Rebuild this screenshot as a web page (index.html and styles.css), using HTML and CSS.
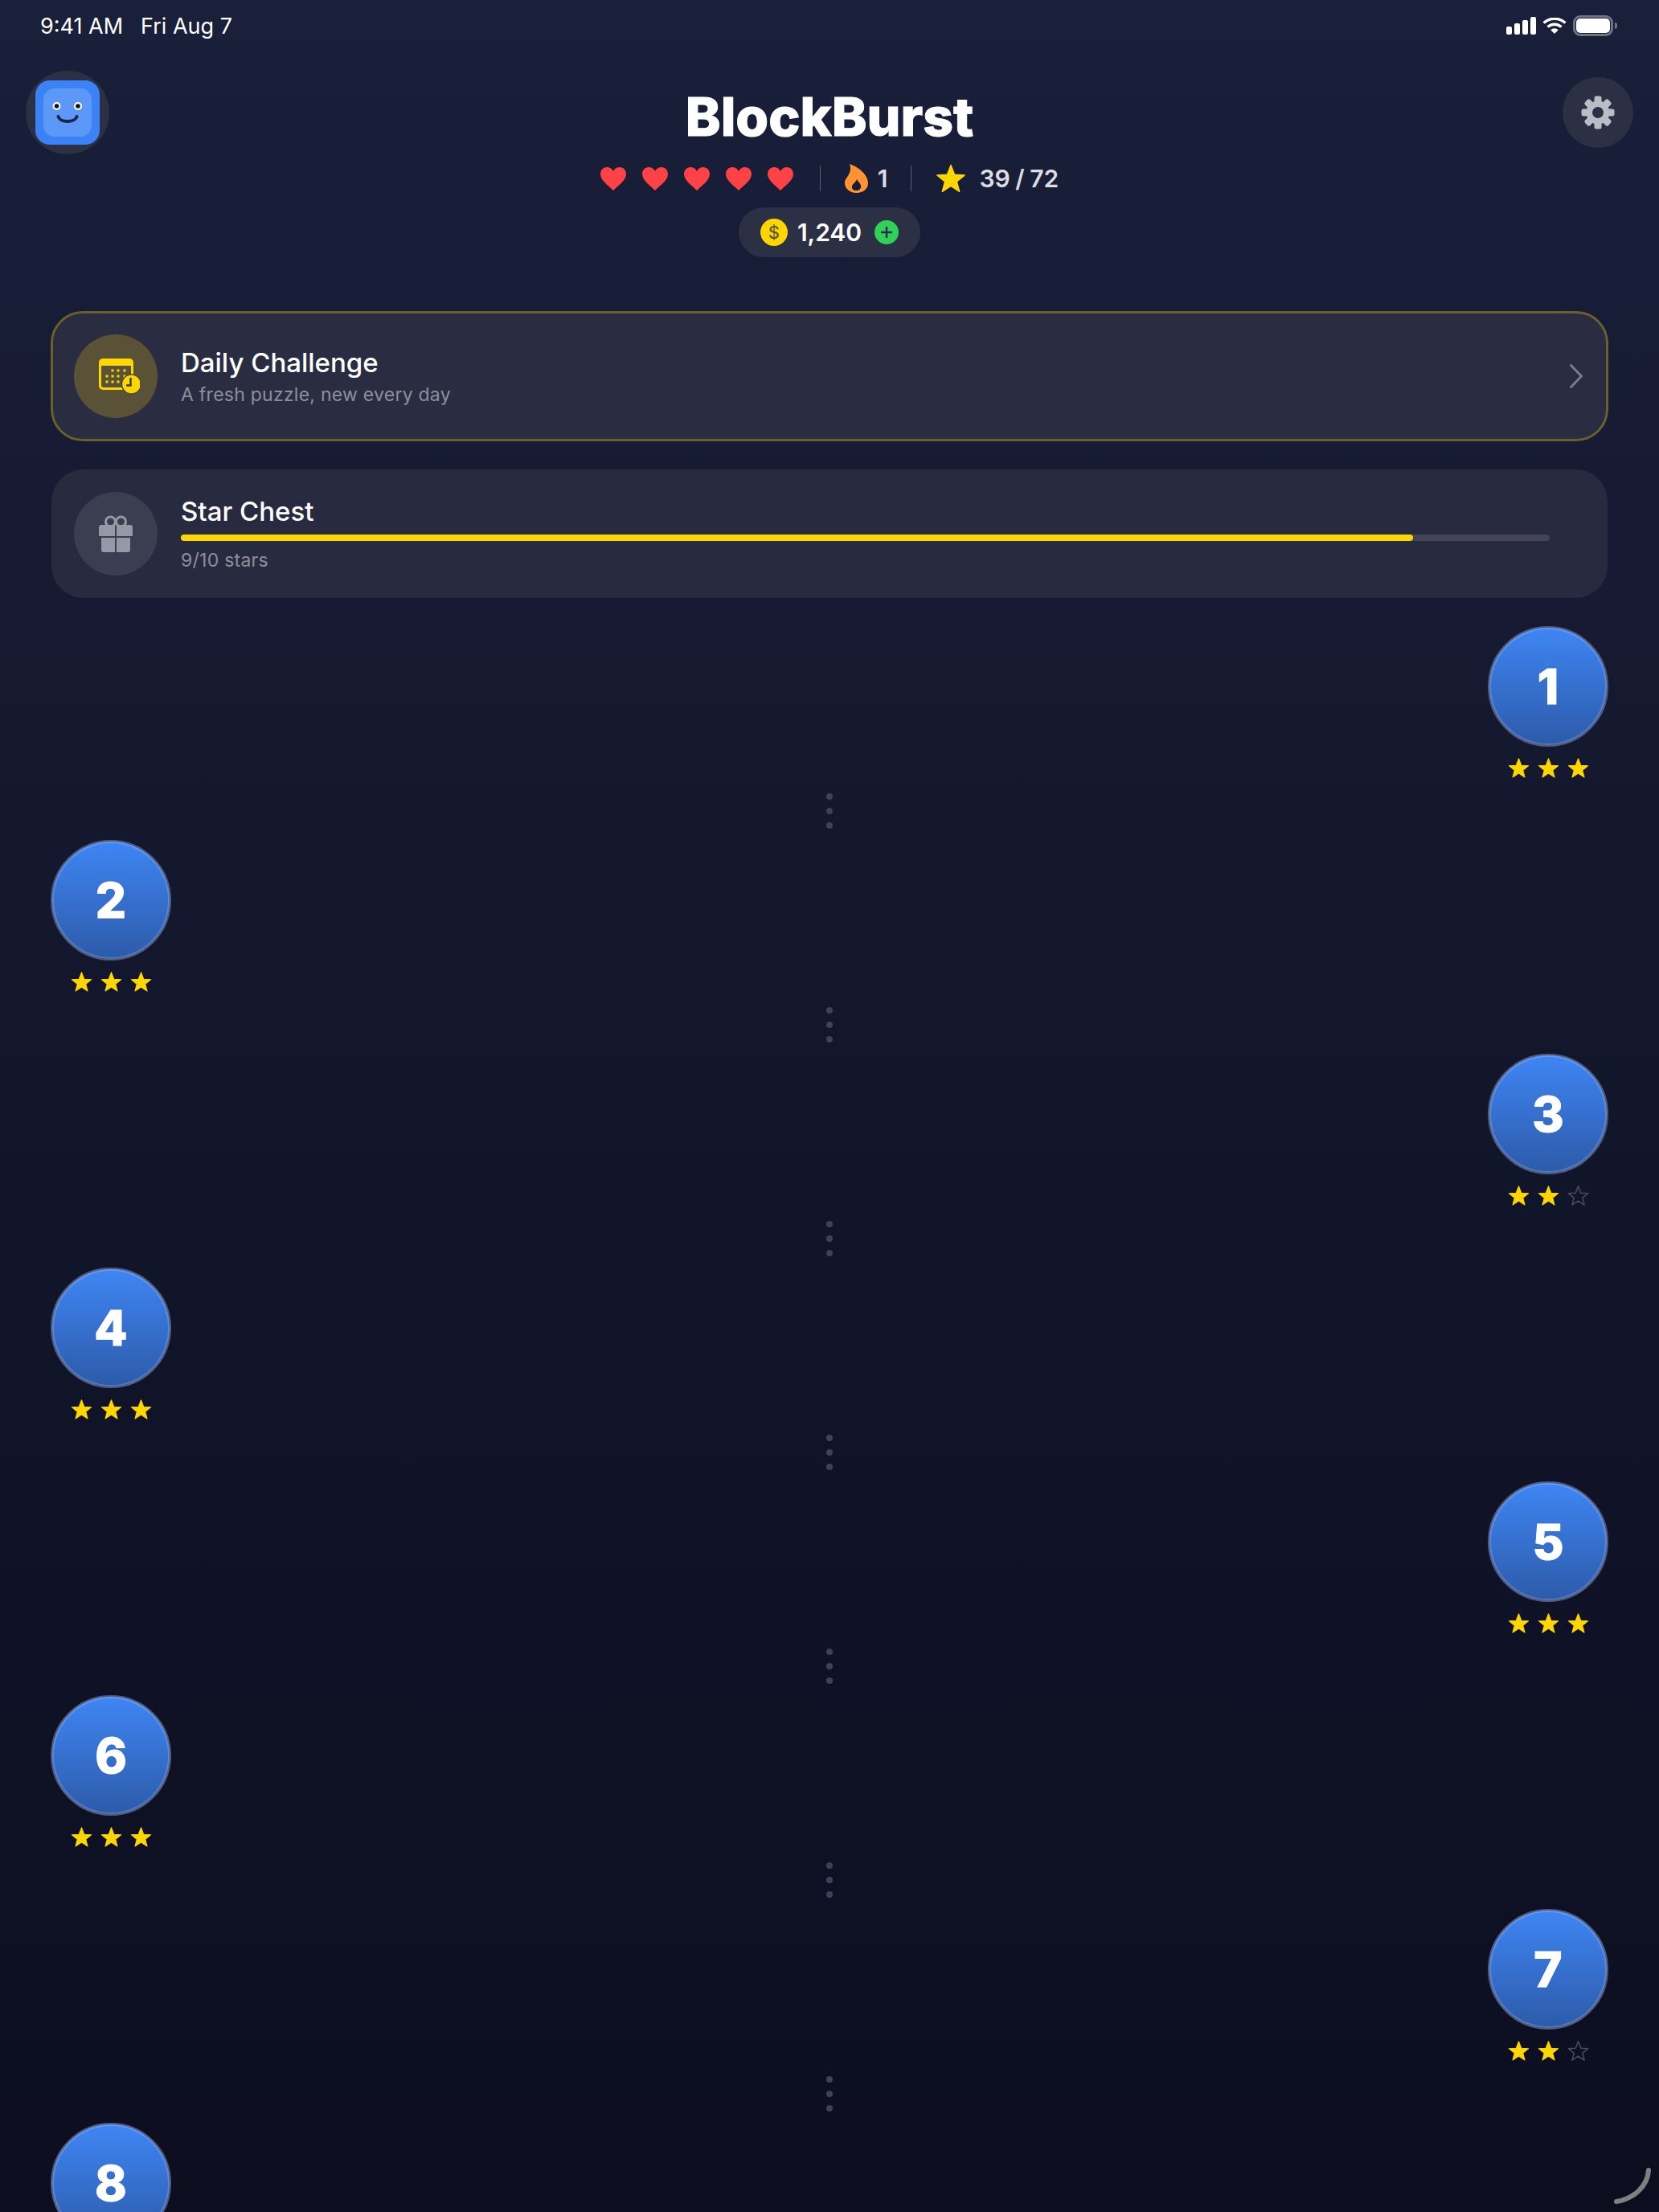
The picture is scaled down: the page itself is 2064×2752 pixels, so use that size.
FILE: index.html
```html
<!DOCTYPE html>
<html lang="en">
<head>
    <meta charset="utf-8">
    <title>BlockBurst</title>
    <link rel="stylesheet" href="styles.css">
</head>
<body>
<svg class="defs" width="0" height="0">
    <symbol id="star" viewBox="1.5 1.5 21 19.200">
        <polygon points="12 2 14.530 8.520 21.510 8.910 16.090 13.330 17.880 20.090 12 16.300 6.120 20.090 7.910 13.330 2.490 8.910 9.470 8.520"/>
    </symbol>
    <symbol id="heart" viewBox="0 0 32 29">
        <path d="M16 29C12 24.500 0 17 0 8.500 0 3.500 3.600 0 8 0c3.400 0 6.300 1.800 8 5 1.700-3.200 4.600-5 8-5 4.400 0 8 3.500 8 8.500C32 17 20 24.500 16 29z"/>
    </symbol>
</svg>

<div class="screen">
    <div class="statusbar">
        <div class="clock"><span>9:41 AM</span><span>Fri Aug 7</span></div>
        <div class="sys-icons">
            <svg class="signal" width="37" height="22" viewBox="0 0 37 22">
                <rect x="0" y="12" width="7" height="10" rx="2"/>
                <rect x="10" y="8" width="7" height="14" rx="2"/>
                <rect x="20" y="4" width="7" height="18" rx="2"/>
                <rect x="30" y="0" width="7" height="22" rx="2"/>
            </svg>
            <svg class="wifi" width="30" height="20" viewBox="0 0 30 20">
                <path d="M1.500 6.500A20 20 0 0 1 28.500 6.500" />
                <path d="M6.500 11.500A12.500 12.500 0 0 1 23.500 11.500" />
                <path class="wedge" d="M15 20l-4.800-4.800a7 7 0 0 1 9.600 0z"/>
            </svg>
            <div class="battery"><div class="battery-level"></div></div>
            <div class="battery-nub"></div>
        </div>
    </div>

    <div class="header">
        <div class="avatar">
            <div class="face">
                <div class="face-inner">
                    <svg width="60" height="60" viewBox="0 0 60 60">
                        <circle cx="16.500" cy="22" r="5" fill="#fff"/>
                        <circle cx="16.500" cy="22" r="2.800" fill="#0d1020"/>
                        <circle cx="43" cy="22" r="5" fill="#fff"/>
                        <circle cx="43" cy="22" r="2.800" fill="#0d1020"/>
                        <path d="M18.500 35C21 43 39 43 41.500 35" fill="none" stroke="#1b2748" stroke-width="4" stroke-linecap="round"/>
                    </svg>
                </div>
            </div>
        </div>

        <div class="header-mid">
            <h1 class="title">BlockBurst</h1>
            <div class="stats">
                <div class="hearts">
                    <svg class="heart"><use href="#heart"/></svg>
                    <svg class="heart"><use href="#heart"/></svg>
                    <svg class="heart"><use href="#heart"/></svg>
                    <svg class="heart"><use href="#heart"/></svg>
                    <svg class="heart"><use href="#heart"/></svg>
                </div>
                <div class="divider"></div>
                <div class="streak">
                    <svg width="29" height="36" viewBox="0 0 29 36">
                        <path fill="#ff9430" fill-rule="evenodd" d="M6 0C16 3 29 13 29 24 29 31 23 36 14.500 36 6 36 0 30 0 24 0 19 3 17 5 13 7 9 8 5 6 0zM15 19C17 23 21 25 20 29 19.500 32 17 33.500 14 33 11 33 8.500 31 9 28 9.500 24 14 23 15 19z"/>
                    </svg>
                    <span>1</span>
                </div>
                <div class="divider"></div>
                <div class="star-count">
                    <svg class="star big"><use href="#star"/></svg>
                    <span>39 / 72</span>
                </div>
            </div>
            <div class="coins">
                <div class="coin">$</div>
                <span class="coin-value">1,240</span>
                <svg class="coin-add" width="30" height="30" viewBox="0 0 30 30">
                    <circle cx="15" cy="15" r="15" fill="#30d158"/>
                    <path d="M15 8v14M8 15h14" stroke="#27304a" stroke-width="2.500"/>
                </svg>
            </div>
        </div>

        <div class="settings">
            <svg width="42" height="42" viewBox="0 0 42 42">
                <g fill="#babcc6">
                    <rect x="16.500" y="0.500" width="9" height="9" rx="2.500"/>
                    <rect x="16.500" y="32.500" width="9" height="9" rx="2.500"/>
                    <rect x="0.500" y="16.500" width="9" height="9" rx="2.500"/>
                    <rect x="32.500" y="16.500" width="9" height="9" rx="2.500"/>
                    <rect x="16.500" y="0.500" width="9" height="9" rx="2.500" transform="rotate(45 21 21)"/>
                    <rect x="16.500" y="32.500" width="9" height="9" rx="2.500" transform="rotate(45 21 21)"/>
                    <rect x="0.500" y="16.500" width="9" height="9" rx="2.500" transform="rotate(45 21 21)"/>
                    <rect x="32.500" y="16.500" width="9" height="9" rx="2.500" transform="rotate(45 21 21)"/>
                </g>
                <circle cx="21" cy="21" r="10.750" fill="none" stroke="#babcc6" stroke-width="7.500"/>
            </svg>
        </div>
    </div>

    <div class="main">
        <div class="card card-daily">
            <div class="card-icon icon-daily">
                <svg width="60" height="52" viewBox="0 0 60 52">
                    <path fill="#ffd600" fill-rule="evenodd" d="M14 4h33a5 5 0 0 1 5 5v29a5 5 0 0 1-5 5H14a5 5 0 0 1-5-5V9a5 5 0 0 1 5-5zM12 13v24a3 3 0 0 0 3 3h31a3 3 0 0 0 3-3V13z"/>
                    <g fill="#ffd600">
                        <rect x="24.500" y="17.500" width="3" height="3"/><rect x="31.500" y="17.500" width="3" height="3"/><rect x="39.500" y="17.500" width="3" height="3"/>
                        <rect x="17.500" y="24.500" width="3" height="3"/><rect x="24.500" y="24.500" width="3" height="3"/><rect x="31.500" y="24.500" width="3" height="3"/><rect x="39.500" y="24.500" width="3" height="3"/>
                        <rect x="17.500" y="31.500" width="3" height="3"/><rect x="24.500" y="31.500" width="3" height="3"/><rect x="31.500" y="31.500" width="3" height="3"/>
                    </g>
                    <circle cx="49.500" cy="36" r="12" fill="#ffd600" stroke="#4f4a38" stroke-width="1.500"/>
                    <path d="M48.500 28v9.500H43" fill="none" stroke="#3f3c34" stroke-width="2.500"/>
                </svg>
            </div>
            <div class="card-text">
                <div class="card-title">Daily Challenge</div>
                <div class="card-sub">A fresh puzzle, new every day</div>
            </div>
            <svg class="chevron" width="16" height="30" viewBox="0 0 16 30">
                <path d="M1.500 1.500L14.500 15 1.500 28.500" fill="none" stroke="#7a7b8a" stroke-width="3" stroke-linecap="round"/>
            </svg>
        </div>

        <div class="card card-chest">
            <div class="card-icon icon-chest">
                <svg width="42" height="46" viewBox="0 0 42 46">
                    <g fill="none" stroke="#9598a5" stroke-width="3">
                        <circle cx="14.500" cy="8" r="6"/>
                        <circle cx="27.500" cy="8" r="6"/>
                    </g>
                    <path fill="#9598a5" d="M3 12h17v14H0V15a3 3 0 0 1 3-3zM22 12h17a3 3 0 0 1 3 3v11H22zM3 28h17v18H6a3 3 0 0 1-3-3zM22 28h17v15a3 3 0 0 1-3 3H22z"/>
                </svg>
            </div>
            <div class="card-text">
                <div class="card-title">Star Chest</div>
                <div class="bar"><div class="bar-fill" style="width: 90%"></div></div>
                <div class="card-sub">9/10 stars</div>
            </div>
        </div>

        <div class="path">
            <div class="level right">
                <div class="node">1</div>
                <div class="stars">
                    <svg class="star"><use href="#star"/></svg><svg class="star"><use href="#star"/></svg><svg class="star"><use href="#star"/></svg>
                </div>
            </div>
            <div class="dots"><i></i><i></i><i></i></div>

            <div class="level left">
                <div class="node">2</div>
                <div class="stars">
                    <svg class="star"><use href="#star"/></svg><svg class="star"><use href="#star"/></svg><svg class="star"><use href="#star"/></svg>
                </div>
            </div>
            <div class="dots"><i></i><i></i><i></i></div>

            <div class="level right">
                <div class="node">3</div>
                <div class="stars">
                    <svg class="star"><use href="#star"/></svg><svg class="star"><use href="#star"/></svg><svg class="star empty"><use href="#star"/></svg>
                </div>
            </div>
            <div class="dots"><i></i><i></i><i></i></div>

            <div class="level left">
                <div class="node">4</div>
                <div class="stars">
                    <svg class="star"><use href="#star"/></svg><svg class="star"><use href="#star"/></svg><svg class="star"><use href="#star"/></svg>
                </div>
            </div>
            <div class="dots"><i></i><i></i><i></i></div>

            <div class="level right">
                <div class="node">5</div>
                <div class="stars">
                    <svg class="star"><use href="#star"/></svg><svg class="star"><use href="#star"/></svg><svg class="star"><use href="#star"/></svg>
                </div>
            </div>
            <div class="dots"><i></i><i></i><i></i></div>

            <div class="level left">
                <div class="node">6</div>
                <div class="stars">
                    <svg class="star"><use href="#star"/></svg><svg class="star"><use href="#star"/></svg><svg class="star"><use href="#star"/></svg>
                </div>
            </div>
            <div class="dots"><i></i><i></i><i></i></div>

            <div class="level right">
                <div class="node">7</div>
                <div class="stars">
                    <svg class="star"><use href="#star"/></svg><svg class="star"><use href="#star"/></svg><svg class="star empty"><use href="#star"/></svg>
                </div>
            </div>
            <div class="dots"><i></i><i></i><i></i></div>

            <div class="level left">
                <div class="node">8</div>
            </div>
        </div>
    </div>

    <svg class="corner-arc" width="64" height="64" viewBox="0 0 64 64">
        <path d="M51 12C50 32 32 48 11 51" fill="none" stroke="#808080" stroke-width="6" stroke-linecap="round"/>
    </svg>
</div>
</body>
</html>
```

FILE: styles.css
```css
html, body {
    margin: 0;
    padding: 0;
    background: #0c0e20;
}

.defs {
    position: absolute;
}

.screen {
    position: relative;
    width: 2064px;
    height: 2752px;
    overflow: hidden;
    background: linear-gradient(180deg, #1a1f3a 0%, #12162b 50%, #0c0e20 100%);
    font-family: "Inter", "Liberation Sans", sans-serif;
    color: #fff;
}

/* status bar */
.statusbar {
    height: 64px;
    display: flex;
    align-items: center;
    justify-content: space-between;
    padding: 0 52px 0 50px;
}

.clock {
    display: flex;
    gap: 22px;
    font-size: 27px;
}

.sys-icons {
    display: flex;
    align-items: center;
}

.signal rect {
    fill: #fff;
}

.wifi {
    margin: 0 8px 0 8px;
}

.wifi path {
    fill: none;
    stroke: #fff;
    stroke-width: 3.5;
}

.wifi .wedge {
    fill: #fff;
    stroke: none;
}

.battery {
    width: 50px;
    height: 26px;
    box-sizing: border-box;
    border: 3px solid #6f7285;
    border-radius: 9px;
    padding: 1px;
}

.battery-level {
    height: 100%;
    background: #fff;
    border-radius: 5px;
}

.battery-nub {
    width: 3px;
    height: 8px;
    margin-left: 2px;
    background: #6f7285;
    border-radius: 0 3px 3px 0;
}

/* header */
.header {
    display: grid;
    grid-template-columns: 1fr auto 1fr;
    padding: 24px 32px 0;
}

.avatar {
    width: 104px;
    height: 104px;
    border-radius: 50%;
    background: #2c3045;
    display: flex;
    align-items: center;
    justify-content: center;
}

.face {
    width: 80px;
    height: 80px;
    border-radius: 18px;
    background: #3b82f6;
    display: flex;
    align-items: center;
    justify-content: center;
}

.face-inner {
    width: 60px;
    height: 60px;
    border-radius: 14px;
    background: #5c98f8;
}

.face-inner svg {
    display: block;
}

.header-mid {
    padding-top: 19px;
    display: flex;
    flex-direction: column;
    align-items: center;
}

.title {
    margin: 0;
    font-size: 66px;
    line-height: 76px;
    font-weight: 800;
    -webkit-text-stroke: 1px #fff;
}

.stats {
    margin-top: 21px;
    height: 36px;
    display: flex;
    align-items: center;
    font-size: 30px;
    font-weight: 600;
    color: #dcdce2;
}

.hearts {
    display: flex;
    gap: 20px;
}

.heart {
    display: block;
    width: 32px;
    height: 29px;
    fill: #ff4245;
}

.divider {
    width: 1px;
    height: 32px;
    margin: 0 30px 0 33px;
    background: #5d5f70;
}

.streak + .divider {
    margin-left: 29px;
}

.streak {
    display: flex;
    align-items: center;
    gap: 12px;
}

.star-count {
    display: flex;
    align-items: center;
    gap: 16px;
    word-spacing: -1px;
}

.star {
    display: block;
    width: 27px;
    height: 25px;
    fill: #ffd600;
    stroke: #ffd600;
    stroke-width: 0.8;
    stroke-linejoin: round;
}

.star.big {
    width: 38px;
    height: 36px;
}

.star.empty {
    fill: none;
    stroke: #4a4c5c;
    stroke-width: 1.2;
}

.coins {
    margin-top: 18px;
    height: 62px;
    padding: 0 27px;
    display: flex;
    align-items: center;
    border-radius: 31px;
    background: #2c3045;
}

.coin {
    width: 34px;
    height: 34px;
    border-radius: 50%;
    background: #ffd600;
    color: #5c5a3c;
    font-size: 22px;
    font-weight: 500;
    line-height: 34px;
    text-align: center;
}

.coin-value {
    margin: 0 16px 0 12px;
    font-size: 30px;
    font-weight: 600;
}

.settings {
    justify-self: end;
    margin-top: 8px;
    width: 88px;
    height: 88px;
    border-radius: 50%;
    background: #2c3045;
    display: flex;
    align-items: center;
    justify-content: center;
}

/* cards */
.main {
    padding: 67px 64px 0;
    display: flex;
    flex-direction: column;
}

.card {
    box-sizing: border-box;
    display: flex;
    align-items: center;
    gap: 29px;
    border-radius: 40px;
}

.card-daily {
    height: 162px;
    margin: 0 -1px;
    padding: 0 29px 0 26px;
    border: 3px solid #6b5f2c;
    background: #2a2d42;
}

.card-daily .card-text {
    padding-top: 2px;
}

.card-chest {
    margin-top: 35px;
    height: 160px;
    padding: 0 72px 0 28px;
    background: #282b3f;
}

.card-chest .card-text {
    padding-top: 2px;
}

.card-icon {
    flex: none;
    width: 104px;
    height: 104px;
    border-radius: 50%;
    display: flex;
    align-items: center;
    justify-content: center;
}

.icon-daily {
    background: #5a5236;
}

.icon-chest {
    background: #3a3e50;
}

.card-text {
    flex: 1;
}

.card-title {
    font-size: 33px;
    line-height: 40px;
    font-weight: 500;
}

.card-sub {
    font-size: 23px;
    line-height: 34px;
    letter-spacing: 0.25px;
    color: #8e8f9c;
}

.card-daily .card-sub {
    margin-top: 3px;
}

.bar {
    height: 8px;
    margin: 9.500px 0 7px;
    border-radius: 4px;
    background: #44455a;
}

.bar-fill {
    height: 100%;
    border-radius: 4px;
    background: #ffd600;
}

/* level path */
.path {
    margin: 35px -1px 0;
    display: flex;
    flex-direction: column;
}

.level {
    width: 150px;
    height: 192px;
    flex: none;
}

.level.left {
    align-self: flex-start;
}

.level.right {
    align-self: flex-end;
}

.node {
    box-sizing: border-box;
    width: 150px;
    height: 150px;
    border-radius: 50%;
    border: 2px solid #555b78;
    background: linear-gradient(180deg, #3f86f5 0%, #2c5aa8 100%);
    background-origin: border-box;
    box-shadow: inset 0 0 0 2px rgba(255, 255, 255, 0.18);
    font-size: 60px;
    font-weight: 800;
    line-height: 146px;
    text-align: center;
    -webkit-text-stroke: 1px #fff;
}

.stars {
    margin-top: 14px;
    display: flex;
    justify-content: center;
    gap: 10px;
}

.dots {
    flex: none;
    align-self: center;
    height: 44px;
    margin: 16px 0 14px;
    display: flex;
    flex-direction: column;
    justify-content: space-between;
}

.dots i {
    display: block;
    width: 8px;
    height: 8px;
    border-radius: 50%;
    background: #3f4256;
}

.corner-arc {
    position: absolute;
    right: 0;
    bottom: 0;
}
```
